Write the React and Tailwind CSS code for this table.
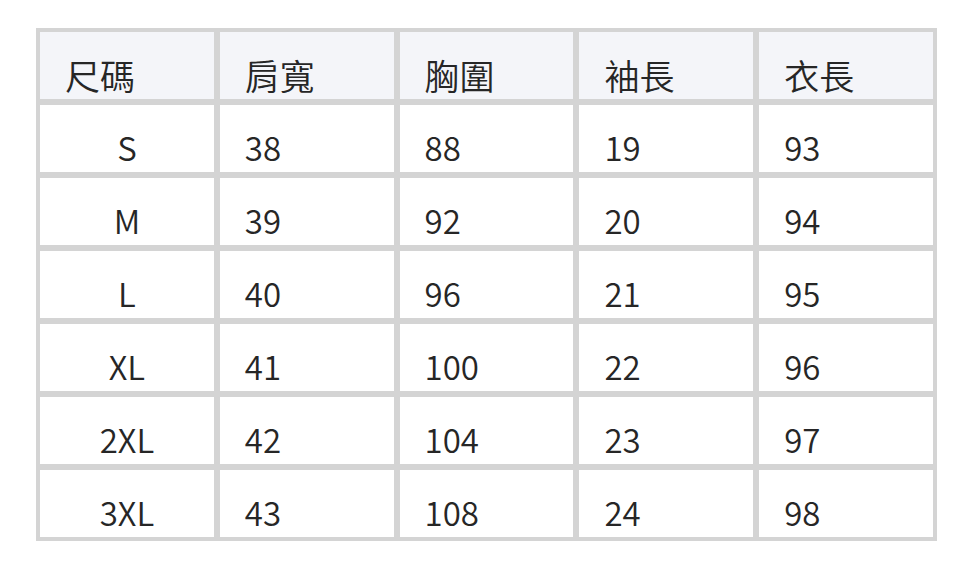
const headers = ['尺碼', '肩寬', '胸圍', '袖長', '衣長'];

const rows = [
    ['S', '38', '88', '19', '93'],
    ['M', '39', '92', '20', '94'],
    ['L', '40', '96', '21', '95'],
    ['XL', '41', '100', '22', '96'],
    ['2XL', '42', '104', '23', '97'],
    ['3XL', '43', '108', '24', '98'],
];

export default function App() {
    return (
        <div
            className="w-[972px] h-[568px] bg-white pl-[36px] pt-[28px] text-[#262626] font-[350]"
            style={{ fontFamily: '"Noto Sans CJK TC", "Noto Sans", sans-serif' }}
        >
            <div className="w-[901px] grid grid-cols-5 gap-[6px] p-[4px] bg-[#d4d4d4]">
                {headers.map((h) => (
                    <div key={h} className="h-[67px] bg-[#f4f5f9] pl-[25px] pt-[25px] text-[35px] leading-none">
                        {h}
                    </div>
                ))}
                {rows.map((row) =>
                    row.map((cell, i) => (
                        <div
                            key={row[0] + i}
                            className={
                                i === 0
                                    ? 'h-[67px] bg-white pt-[26px] text-[33px] leading-none text-center'
                                    : 'h-[67px] bg-white pl-[25px] pt-[26px] text-[33px] leading-none'
                            }
                        >
                            {cell}
                        </div>
                    ))
                )}
            </div>
        </div>
    );
}
